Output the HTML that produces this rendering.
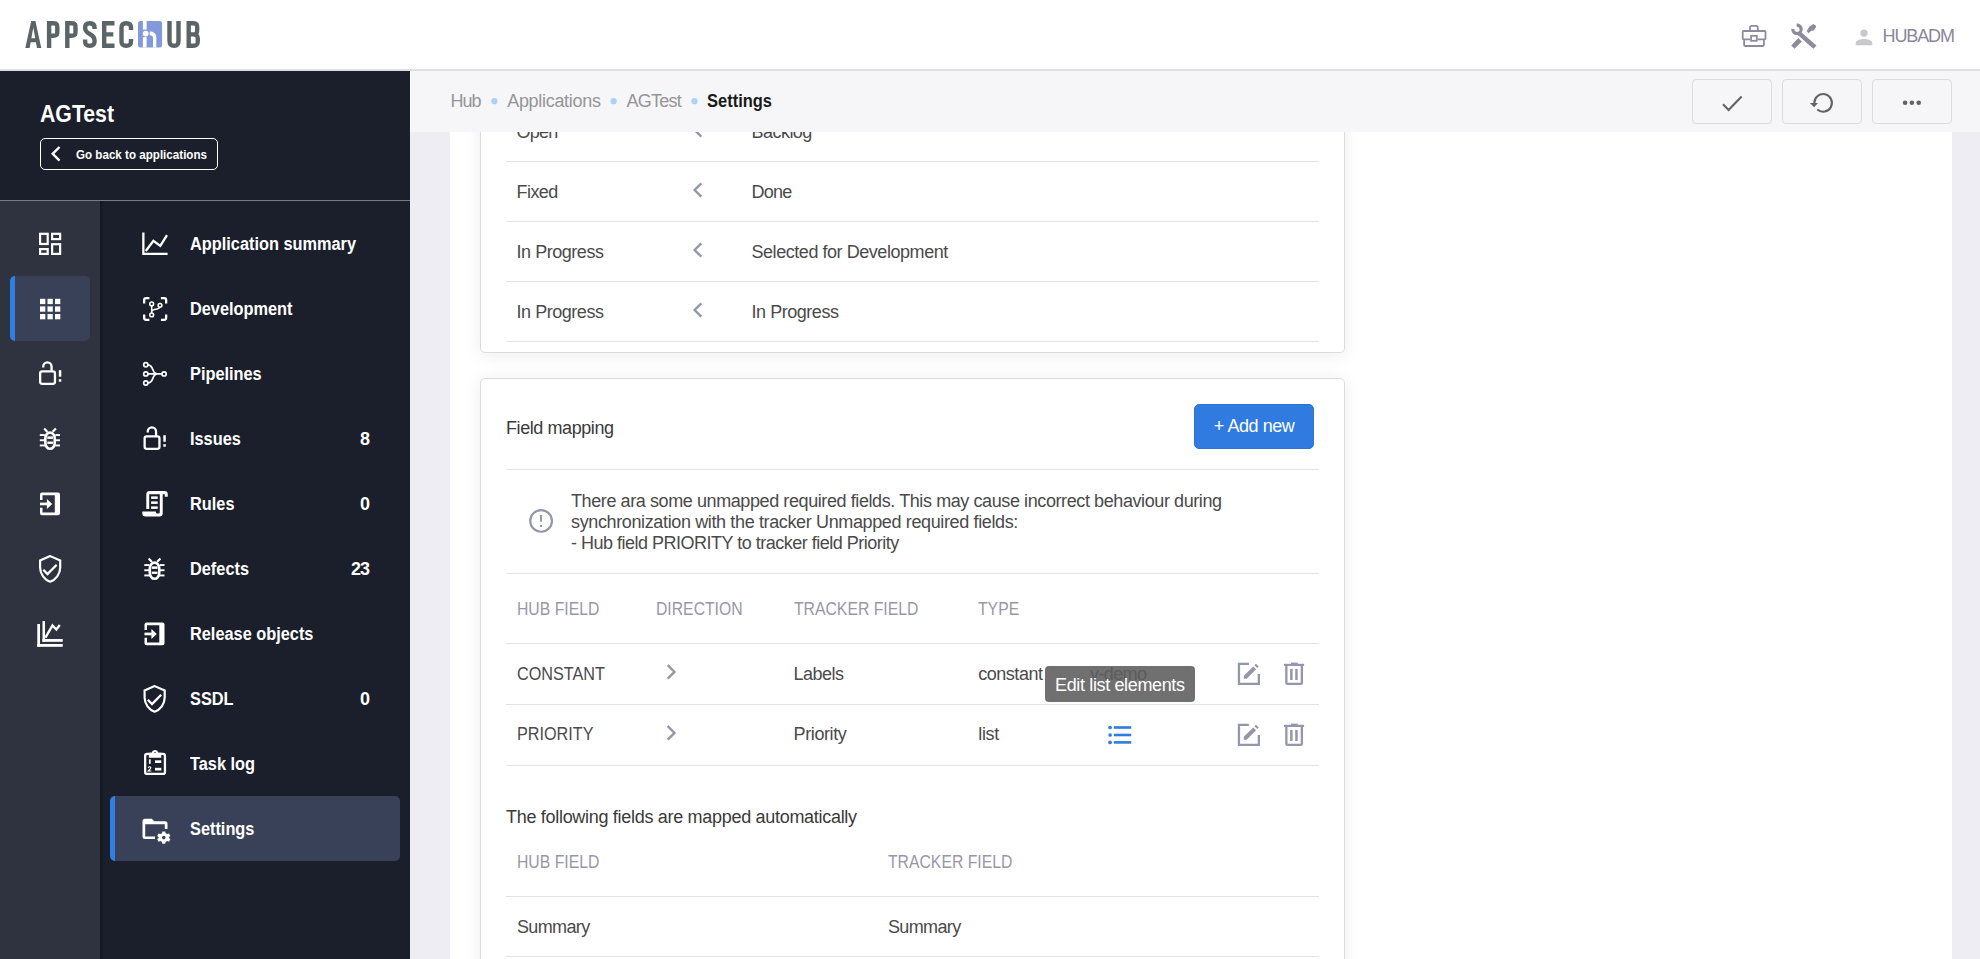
<!DOCTYPE html>
<html><head><meta charset="utf-8"><title>AppSec Hub - Settings</title>
<style>
html,body{margin:0;padding:0;}
body{width:1980px;height:959px;overflow:hidden;position:relative;background:#ededf3;font-family:"Liberation Sans",sans-serif;}
.b{position:absolute;box-sizing:border-box;}
.t{position:absolute;white-space:nowrap;line-height:1;font-family:"Liberation Sans",sans-serif;}
</style></head><body>
<!-- content white panel -->
<div class="b" style="left:450px;top:132px;width:1502px;height:827px;background:#fff"></div>
<!-- card 1 -->
<div class="b" style="left:480px;top:60px;width:865px;height:293px;background:#fff;border:1px solid #dcdcdc;border-radius:5px;box-shadow:0 2px 18px rgba(0,0,0,0.075)"></div>
<!-- card 2 -->
<div class="b" style="left:480px;top:378px;width:865px;height:640px;background:#fff;border:1px solid #dcdcdc;border-radius:5px;box-shadow:0 2px 18px rgba(0,0,0,0.075)"></div>
<!-- card 1 separators -->
<div class="b" style="left:506px;top:161px;width:813px;height:1px;background:#e3e3e3"></div>
<div class="b" style="left:506px;top:221px;width:813px;height:1px;background:#e3e3e3"></div>
<div class="b" style="left:506px;top:281px;width:813px;height:1px;background:#e3e3e3"></div>
<div class="b" style="left:506px;top:341px;width:813px;height:1px;background:#e3e3e3"></div>
<!-- card 2 separators -->
<div class="b" style="left:506px;top:469px;width:813px;height:1px;background:#e3e3e3"></div>
<div class="b" style="left:506px;top:573px;width:813px;height:1px;background:#e3e3e3"></div>
<div class="b" style="left:506px;top:643px;width:813px;height:1px;background:#e3e3e3"></div>
<div class="b" style="left:506px;top:704px;width:813px;height:1px;background:#e3e3e3"></div>
<div class="b" style="left:506px;top:765px;width:813px;height:1px;background:#e3e3e3"></div>
<div class="b" style="left:506px;top:896px;width:813px;height:1px;background:#e3e3e3"></div>
<div class="b" style="left:506px;top:956px;width:813px;height:1px;background:#e3e3e3"></div>
<!-- add new button -->
<div class="b" style="left:1194px;top:404px;width:120px;height:45px;background:#2f7be0;border:1px solid #2a72d8;border-radius:5px"></div>
<div class="t" style="left:516.50px;top:122.76px;font-size:18px;color:#4a4a4a;letter-spacing:-0.734px;">Open</div>
<div class="t" style="left:751.50px;top:122.76px;font-size:18px;color:#4a4a4a;letter-spacing:-0.534px;">Backlog</div>
<div class="t" style="left:516.50px;top:182.76px;font-size:18px;color:#4a4a4a;letter-spacing:-0.550px;">Fixed</div>
<div class="t" style="left:751.50px;top:182.76px;font-size:18px;color:#4a4a4a;letter-spacing:-0.717px;">Done</div>
<div class="t" style="left:516.50px;top:242.76px;font-size:18px;color:#4a4a4a;letter-spacing:-0.460px;">In Progress</div>
<div class="t" style="left:751.50px;top:242.76px;font-size:18px;color:#4a4a4a;letter-spacing:-0.450px;">Selected for Development</div>
<div class="t" style="left:516.50px;top:302.76px;font-size:18px;color:#4a4a4a;letter-spacing:-0.460px;">In Progress</div>
<div class="t" style="left:751.50px;top:302.76px;font-size:18px;color:#4a4a4a;letter-spacing:-0.460px;">In Progress</div>
<div class="t" style="left:506.00px;top:419.06px;font-size:18px;color:#3a3a3a;letter-spacing:-0.421px;">Field mapping</div>
<div class="t" style="left:1213.80px;top:417.26px;font-size:18px;color:#ffffff;letter-spacing:-0.446px;">+ Add new</div>
<div class="t" style="left:571.00px;top:491.76px;font-size:18px;color:#4a4a4a;letter-spacing:-0.407px;">There ara some unmapped required fields. This may cause incorrect behaviour during</div>
<div class="t" style="left:571.00px;top:512.71px;font-size:18px;color:#4a4a4a;letter-spacing:-0.367px;">synchronization with the tracker Unmapped required fields:</div>
<div class="t" style="left:571.00px;top:533.66px;font-size:18px;color:#4a4a4a;letter-spacing:-0.501px;">- Hub field PRIORITY to tracker field Priority</div>
<div class="t" style="left:517.00px;top:599.56px;font-size:18px;color:#9897a8;transform:scaleX(0.8750);transform-origin:0 0;">HUB FIELD</div>
<div class="t" style="left:655.60px;top:599.56px;font-size:18px;color:#9897a8;transform:scaleX(0.8750);transform-origin:0 0;">DIRECTION</div>
<div class="t" style="left:793.60px;top:599.56px;font-size:18px;color:#9897a8;transform:scaleX(0.8750);transform-origin:0 0;">TRACKER FIELD</div>
<div class="t" style="left:978.30px;top:599.56px;font-size:18px;color:#9897a8;transform:scaleX(0.8750);transform-origin:0 0;">TYPE</div>
<div class="t" style="left:517.00px;top:664.66px;font-size:18px;color:#4a4a4a;transform:scaleX(0.9000);transform-origin:0 0;">CONSTANT</div>
<div class="t" style="left:793.60px;top:664.66px;font-size:18px;color:#4a4a4a;letter-spacing:-0.530px;">Labels</div>
<div class="t" style="left:978.30px;top:664.66px;font-size:18px;color:#4a4a4a;letter-spacing:-0.486px;">constant</div>
<div class="t" style="left:517.00px;top:725.46px;font-size:18px;color:#4a4a4a;transform:scaleX(0.9000);transform-origin:0 0;">PRIORITY</div>
<div class="t" style="left:793.60px;top:725.46px;font-size:18px;color:#4a4a4a;letter-spacing:-0.400px;">Priority</div>
<div class="t" style="left:978.30px;top:725.46px;font-size:18px;color:#4a4a4a;letter-spacing:-0.367px;">list</div>
<div class="t" style="left:1090.00px;top:664.66px;font-size:18px;color:#333;letter-spacing:-0.600px;">v-demo</div>
<div class="t" style="left:506.00px;top:807.96px;font-size:18px;color:#3a3a3a;letter-spacing:-0.299px;">The following fields are mapped automatically</div>
<div class="t" style="left:517.00px;top:853.26px;font-size:18px;color:#9897a8;transform:scaleX(0.8750);transform-origin:0 0;">HUB FIELD</div>
<div class="t" style="left:888.00px;top:853.26px;font-size:18px;color:#9897a8;transform:scaleX(0.8750);transform-origin:0 0;">TRACKER FIELD</div>
<div class="t" style="left:517.00px;top:917.56px;font-size:18px;color:#4a4a4a;letter-spacing:-0.642px;">Summary</div>
<div class="t" style="left:888.00px;top:917.56px;font-size:18px;color:#4a4a4a;letter-spacing:-0.642px;">Summary</div>
<svg style="position:absolute;left:0;top:0" width="1980" height="959" viewBox="0 0 1980 959">
<g fill="none" stroke="#9497ab" stroke-width="2.35" stroke-linecap="butt" stroke-linejoin="miter">
<path d="M701.3,123.3 L694.6,130 L701.3,136.7"/>
<path d="M701.3,183.3 L694.6,190 L701.3,196.7"/>
<path d="M701.3,243.3 L694.6,250 L701.3,256.7"/>
<path d="M701.3,303.3 L694.6,310 L701.3,316.7"/>
<path d="M667.7,665.2 L674.5,671.9 L667.7,678.6"/>
<path d="M667.7,726.2 L674.5,732.9 L667.7,739.6"/>
<circle cx="541.1" cy="520.9" r="10.85" stroke-width="2.2"/>
</g>
<g fill="#9497ab">
<rect x="540" y="515" width="2" height="6.7"/>
<rect x="540" y="525" width="2" height="2"/>
</g>
<!-- edit / trash -->
<g>
<path d="M1248.9,663.95 H1238.95 V683.85 H1258.85 V673.9" fill="none" stroke="#9497ab" stroke-width="2.3"/>
<path d="M1243.8,675.8 L1253.2,666.4 L1256.1,669.3 L1246.7,678.7 L1243.8,678.7 Z" fill="#9497ab"/>
<path d="M1254.4,665.2 L1255.9,663.7 L1258.8,666.6 L1257.3,668.1 Z" fill="#9497ab"/>
<rect x="1284" y="663.8" width="20.1" height="2.2" fill="#9497ab"/>
<rect x="1291" y="662.6" width="6.8" height="2" fill="#9497ab"/>
<path d="M1286.35,666 V682.8 Q1286.35,683.85 1287.4,683.85 H1300.8 Q1301.85,683.85 1301.85,682.8 V666" fill="none" stroke="#9497ab" stroke-width="2.3"/>
<rect x="1290.1" y="668.9" width="2.5" height="11.1" fill="#9497ab"/>
<rect x="1295.2" y="668.9" width="2.5" height="11.1" fill="#9497ab"/>
</g>
<g transform="translate(0,61)">
<path d="M1248.9,663.95 H1238.95 V683.85 H1258.85 V673.9" fill="none" stroke="#9497ab" stroke-width="2.3"/>
<path d="M1243.8,675.8 L1253.2,666.4 L1256.1,669.3 L1246.7,678.7 L1243.8,678.7 Z" fill="#9497ab"/>
<path d="M1254.4,665.2 L1255.9,663.7 L1258.8,666.6 L1257.3,668.1 Z" fill="#9497ab"/>
<rect x="1284" y="663.8" width="20.1" height="2.2" fill="#9497ab"/>
<rect x="1291" y="662.6" width="6.8" height="2" fill="#9497ab"/>
<path d="M1286.35,666 V682.8 Q1286.35,683.85 1287.4,683.85 H1300.8 Q1301.85,683.85 1301.85,682.8 V666" fill="none" stroke="#9497ab" stroke-width="2.3"/>
<rect x="1290.1" y="668.9" width="2.5" height="11.1" fill="#9497ab"/>
<rect x="1295.2" y="668.9" width="2.5" height="11.1" fill="#9497ab"/>
</g>
<!-- list icon -->
<g fill="#2f7be0">
<circle cx="1110.1" cy="727.5" r="1.85"/><circle cx="1110.1" cy="735" r="1.85"/><circle cx="1110.1" cy="742.4" r="1.85"/>
<rect x="1113.8" y="726.2" width="17.4" height="2.6"/><rect x="1113.8" y="733.7" width="17.4" height="2.6"/><rect x="1113.8" y="741.1" width="17.4" height="2.6"/>
</g>
</svg>

<!-- tooltip -->
<div class="b" style="left:1045px;top:666px;width:150px;height:35.5px;background:rgba(97,97,97,0.9);border-radius:4px"></div>
<div class="t" style="left:1055px;top:676.26px;font-size:18px;color:#ffffff;letter-spacing:-0.356px">Edit list elements</div>
<!-- header -->
<div class="b" style="left:0;top:0;width:1980px;height:71px;background:#fff;border-bottom:2px solid #e0e0e0"></div>
<!-- breadcrumb bar -->
<div class="b" style="left:410px;top:71px;width:1px;height:61px;background:#fff"></div>
<div class="b" style="left:411px;top:71px;width:1569px;height:61px;background:#f6f6f9"></div>
<!-- action buttons -->
<div class="b" style="left:1692px;top:79px;width:80px;height:45px;border:1px solid #dcdcdc;border-radius:4px"></div>
<div class="b" style="left:1782px;top:79px;width:80px;height:45px;border:1px solid #dcdcdc;border-radius:4px"></div>
<div class="b" style="left:1872px;top:79px;width:80px;height:45px;border:1px solid #dcdcdc;border-radius:4px"></div>
<!-- sidebar -->
<div class="b" style="left:0;top:71px;width:410px;height:888px;background:#1b1f2b"></div>
<div class="b" style="left:0;top:200px;width:410px;height:1px;background:#797b82"></div>
<div class="b" style="left:0;top:201px;width:100px;height:758px;background:#2f333f"></div>
<div class="b" style="left:100px;top:201px;width:4px;height:758px;background:linear-gradient(90deg,rgba(0,0,0,0.3),rgba(0,0,0,0))"></div>
<div class="b" style="left:10px;top:276px;width:80px;height:65px;background:#384157;border-radius:5px;border-left:5px solid #2f7fe3"></div>
<div class="b" style="left:110px;top:796px;width:290px;height:65px;background:#384157;border-radius:5px;border-left:5px solid #2f7fe3"></div>
<div class="b" style="left:40px;top:138px;width:178px;height:32px;border:1px solid #fff;border-radius:5px"></div>
<div class="t" style="left:1882.60px;top:27.36px;font-size:18px;color:#8a8799;letter-spacing:-1.141px;">HUBADM</div>
<div class="t" style="left:450.60px;top:91.76px;font-size:18px;color:#959595;letter-spacing:-1.009px;">Hub</div>
<div class="t" style="left:507.20px;top:91.76px;font-size:18px;color:#959595;letter-spacing:-0.305px;">Applications</div>
<div class="t" style="left:626.50px;top:91.76px;font-size:18px;color:#959595;letter-spacing:-0.744px;">AGTest</div>
<div class="t" style="left:707.30px;top:91.76px;font-size:18px;color:#1a1a1a;font-weight:bold;transform:scaleX(0.9155);transform-origin:0 0;">Settings</div>
<div class="t" style="left:40.00px;top:102.53px;font-size:23px;color:#ffffff;font-weight:bold;transform:scaleX(0.9241);transform-origin:0 0;">AGTest</div>
<div class="t" style="left:76.00px;top:148.40px;font-size:13px;color:#ffffff;font-weight:bold;transform:scaleX(0.8934);transform-origin:0 0;">Go back to applications</div>
<div class="t" style="left:190.00px;top:235.06px;font-size:18px;color:#ffffff;font-weight:bold;transform:scaleX(0.9070);transform-origin:0 0;">Application summary</div>
<div class="t" style="left:190.00px;top:300.06px;font-size:18px;color:#ffffff;font-weight:bold;transform:scaleX(0.9070);transform-origin:0 0;">Development</div>
<div class="t" style="left:190.00px;top:365.06px;font-size:18px;color:#ffffff;font-weight:bold;transform:scaleX(0.9070);transform-origin:0 0;">Pipelines</div>
<div class="t" style="left:190.00px;top:430.06px;font-size:18px;color:#ffffff;font-weight:bold;transform:scaleX(0.9070);transform-origin:0 0;">Issues</div>
<div class="t" style="left:359.99px;top:430.06px;font-size:18px;color:#ffffff;font-weight:bold;">8</div>
<div class="t" style="left:190.00px;top:495.06px;font-size:18px;color:#ffffff;font-weight:bold;transform:scaleX(0.9070);transform-origin:0 0;">Rules</div>
<div class="t" style="left:359.99px;top:495.06px;font-size:18px;color:#ffffff;font-weight:bold;">0</div>
<div class="t" style="left:190.00px;top:560.06px;font-size:18px;color:#ffffff;font-weight:bold;transform:scaleX(0.9070);transform-origin:0 0;">Defects</div>
<div class="t" style="left:350.98px;top:560.06px;font-size:18px;color:#ffffff;font-weight:bold;letter-spacing:-1.001px;">23</div>
<div class="t" style="left:190.00px;top:625.06px;font-size:18px;color:#ffffff;font-weight:bold;transform:scaleX(0.9070);transform-origin:0 0;">Release objects</div>
<div class="t" style="left:190.00px;top:690.06px;font-size:18px;color:#ffffff;font-weight:bold;transform:scaleX(0.9070);transform-origin:0 0;">SSDL</div>
<div class="t" style="left:359.99px;top:690.06px;font-size:18px;color:#ffffff;font-weight:bold;">0</div>
<div class="t" style="left:190.00px;top:755.06px;font-size:18px;color:#ffffff;font-weight:bold;transform:scaleX(0.9070);transform-origin:0 0;">Task log</div>
<div class="t" style="left:190.00px;top:820.06px;font-size:18px;color:#ffffff;font-weight:bold;transform:scaleX(0.9070);transform-origin:0 0;">Settings</div>
<svg style="position:absolute;left:0;top:0" width="1980" height="959" viewBox="0 0 1980 959">
<!-- logo -->
<g fill="none" stroke="#5b6466" stroke-width="4.4" stroke-linejoin="miter">
<path d="M49.1,48 V23.3 H53.5 C57.3,23.3 57.3,24.5 57.3,28 V31 C57.3,34.5 57.3,35.7 53.5,35.7 H49.1"/>
<path d="M67.3,48 V23.3 H71.7 C75.5,23.3 75.5,24.5 75.5,28 V31 C75.5,34.5 75.5,35.7 71.7,35.7 H67.3"/>
<path d="M94.6,29 V28 C94.6,24.5 93,23.3 89.8,23.3 C86.6,23.3 85.1,24.5 85.1,28 C85.1,31.5 87,32.6 89.8,34 C92.8,35.5 94.6,36.8 94.6,41 C94.6,44.6 93,45.8 89.8,45.8 C86.6,45.8 85.1,44.6 85.1,41 V39.5"/>
<path d="M114.5,23.3 H104.2 V45.8 H114.5 M104.2,34.4 H113.3"/>
<path d="M131,30 V28 C131,24.5 129.5,23.3 126.2,23.3 C123,23.3 121.5,24.5 121.5,28 V41 C121.5,44.6 123,45.8 126.2,45.8 C129.5,45.8 131,44.6 131,41 V39"/>
<path d="M169.5,21.1 V40.8 C169.5,44.6 171,45.8 174,45.8 C177,45.8 178.5,44.6 178.5,40.8 V21.1"/>
<path d="M188.7,48 V23.3 H193.2 C196.9,23.3 197.2,24.5 197.2,28 V29.8 C197.2,33.3 196.4,34.4 193.2,34.4 H188.7 M193.2,34.4 C197,34.4 197.8,35.6 197.8,39 V41.1 C197.8,44.7 196.9,45.8 193.2,45.8 H186.5"/>
</g>
<path fill="#5b6466" fill-rule="evenodd" d="M25.3,48 L31.2,21.1 L35.4,21.1 L41.3,48 L37,48 L35.9,42.2 L30.7,42.2 L29.6,48 Z M31.4,38.2 L35.2,38.2 L33.3,27.5 Z"/>
<rect x="138" y="21" width="24.1" height="26.5" rx="2.5" fill="#8399d9"/>
<rect x="142.9" y="21" width="3.7" height="8.6" fill="#fff"/>
<rect x="142.9" y="37.1" width="3.7" height="10.4" fill="#fff"/>
<circle cx="145.7" cy="33.6" r="2.9" fill="#fff"/>
<path d="M149.7,31.6 C153.5,31.6 156.3,33.5 156.3,37.5 V47.5 H153 V37.8 C153,36 151.8,35.2 149.7,35.2 Z" fill="#fff"/>
<g fill="#acd0f6"><circle cx="494.4" cy="101.2" r="3.1"/><circle cx="613.6" cy="101.2" r="3.1"/><circle cx="694.5" cy="101.2" r="3.1"/></g>
<!-- header icons -->
<g fill="none" stroke="#8e8c9c" stroke-width="1.8">
<path d="M1750.1,39.4 H1743.5 Q1742.7,39.4 1742.7,38.6 V31.8 Q1742.7,31 1743.5,31 H1764.7 Q1765.5,31 1765.5,31.8 V38.6 Q1765.5,39.4 1764.7,39.4 H1757.7"/>
<path d="M1744.1,39.4 V45.1 Q1744.1,46 1745,46 H1763 Q1763.9,46 1763.9,45.1 V39.4"/>
<path d="M1750,31 V27.6 Q1750,25.8 1751.7,25.8 H1756.1 Q1757.8,25.8 1757.8,27.6 V31"/>
<rect x="1751.1" y="35.8" width="5.7" height="5"/>
</g>
<g fill="#8e8c9c">
<path d="M1798.3,38 L1801.8,41.4 L1794.5,48.7 L1791.2,45.4 Z"/>
<path d="M1806.7,31 L1809.4,26.5 L1813.4,24 L1816,25.7 L1816,27.3 L1813.7,30.5 L1811.4,30.7 L1808.4,33.2 Z"/>
<path d="M1797.2,34.6 L1800.4,31.4 L1816.5,45.4 L1813.4,48.7 Z"/>
<path d="M1796.5,23.5 A5.8,5.8 0 1 1 1791.2,28.8 L1794.4,29.07 A2.6,2.6 0 1 0 1796.77,26.71 Z"/>
</g>
<g fill="#c8c8cf">
<circle cx="1864" cy="33.1" r="3.7"/>
<path d="M1855.8,45.2 V43.2 C1855.8,40.6 1860.2,39.1 1864,39.1 C1867.8,39.1 1872.3,40.6 1872.3,43.2 V45.2 Z"/>
</g>
<!-- button icons -->
<g fill="none" stroke="#636363" stroke-width="2.1">
<path d="M1723,104.2 L1728.6,109.9 L1741.6,96.4"/>
<path d="M1817.3,109.5 A8.8,8.8 0 1 0 1814.3,102.9"/>
</g>
<path d="M1809.9,103.1 L1818,103.1 L1814.1,107.2 Z" fill="#636363"/>
<g fill="#636363"><circle cx="1905.1" cy="102.8" r="2.3"/><circle cx="1911.9" cy="102.8" r="2.3"/><circle cx="1918.7" cy="102.8" r="2.3"/></g>
<!-- sidebar -->
<path d="M59.5,147 L52.7,153.8 L59.5,160.6" fill="none" stroke="#fff" stroke-width="2.4"/>
<!-- rail icons -->
<g fill="none" stroke="#fff" stroke-width="2.2">
<rect x="40.1" y="233.8" width="7.6" height="10.2"/>
<rect x="52.1" y="233.8" width="8" height="5.3"/>
<rect x="40.1" y="249.1" width="7.6" height="4.8"/>
<rect x="52.1" y="244.2" width="8" height="9.7"/>
</g>
<g fill="#fff">
<rect x="40" y="298.8" width="5.3" height="5.3"/><rect x="47.5" y="298.8" width="5.3" height="5.3"/><rect x="55" y="298.8" width="5.3" height="5.3"/>
<rect x="40" y="306.4" width="5.3" height="5.3"/><rect x="47.5" y="306.4" width="5.3" height="5.3"/><rect x="55" y="306.4" width="5.3" height="5.3"/>
<rect x="40" y="314" width="5.3" height="5.3"/><rect x="47.5" y="314" width="5.3" height="5.3"/><rect x="55" y="314" width="5.3" height="5.3"/>
</g>
<g>
<rect x="40.15" y="371.35" width="14.8" height="12.5" rx="2" fill="none" stroke="#fff" stroke-width="2.3"/>
<path d="M43.25,367.6 V366.6 A4.15,4.15 0 0 1 51.55,366.6 V371.35" fill="none" stroke="#fff" stroke-width="2.3"/>
<rect x="58.8" y="370.2" width="2.5" height="6.5" fill="#fff"/>
<rect x="58.8" y="379.2" width="2.5" height="2.5" fill="#fff"/>
</g>
<g>
<rect x="45.35" y="432.6" width="9.4" height="16.2" rx="4.7" ry="5.8" fill="none" stroke="#fff" stroke-width="2.6"/>
<g fill="#fff">
<rect x="39.8" y="434.1" width="5" height="1.9"/><rect x="39.8" y="439.3" width="5" height="1.9"/><rect x="39.8" y="444.5" width="5" height="1.9"/>
<rect x="55.3" y="434.1" width="4.7" height="1.9"/><rect x="55.3" y="439.3" width="4.7" height="1.9"/><rect x="55.3" y="444.5" width="4.7" height="1.9"/>
<rect x="47.3" y="436.4" width="5.7" height="2.5"/><rect x="47.3" y="441.6" width="5.7" height="2.3"/>
</g>
<path d="M44.2,428.6 L47.4,431.9 M55.9,428.4 L52.7,431.7" stroke="#fff" stroke-width="2.2"/>
</g>
<g fill="#fff">
<path d="M40,500.1 V494.6 Q40,492.6 42,492.6 H58 Q60,492.6 60,494.6 V513.3 Q60,515.3 58,515.3 H42 Q40,515.3 40,513.3 V507.8 H42.5 V512.5 H54.8 V495.2 H42.5 V500.1 Z"/>
<rect x="40" y="502.6" width="7.3" height="2.7"/>
<path d="M46.9,498.9 L52.3,504 L46.9,509.1 Z"/>
</g>
<g fill="none" stroke="#fff" stroke-width="2.2">
<path d="M50.15,556.1 L40.1,560.4 V567.5 C40.1,574 44.5,579.8 50.15,581.7 C55.8,579.8 60.2,574 60.2,567.5 V560.4 Z"/>
<path d="M43.3,569.7 L47.5,574 L56.7,564.7" stroke-width="2.3"/>
</g>
<g fill="#fff">
<rect x="37.3" y="624" width="2.7" height="22.8"/><rect x="37.3" y="644" width="25.45" height="2.8"/>
<rect x="42.5" y="621.1" width="2.5" height="20.7"/><rect x="42.5" y="639" width="20.25" height="2.8"/>
</g>
<path d="M45.4,637.6 L52.5,625.5 L56.3,629.5 L59.8,625" fill="none" stroke="#fff" stroke-width="2.35"/>
<!-- nav icons -->
<g fill="none" stroke="#fff" stroke-width="2.3">
<path d="M143.35,232.6 V253.95 H167.6"/>
<path d="M145.8,251 L153.4,240.8 L160.3,245.9 L167,235.2"/>
<path d="M144.15,303.6 V300.15 Q144.15,298.15 146.15,298.15 H149.4 M160.9,298.15 H164.15 Q166.15,298.15 166.15,300.15 V303.6 M166.15,314.4 V317.85 Q166.15,319.85 164.15,319.85 H160.9 M149.4,319.85 H146.15 Q144.15,319.85 144.15,317.85 V314.4"/>
</g>
<g fill="none" stroke="#fff" stroke-width="1.5">
<circle cx="151.7" cy="303.9" r="1.9"/><circle cx="160" cy="305.3" r="1.9"/><circle cx="151.7" cy="314.9" r="1.9"/>
<path d="M151.7,305.8 V313 M151.7,311.6 C152.3,309.6 154.8,309.3 157,308.9 C158.8,308.5 159.5,307.6 159.8,307.2"/>
</g>
<g fill="none" stroke="#fff" stroke-width="1.7">
<circle cx="145.8" cy="364.8" r="2.1"/><circle cx="145.8" cy="373.9" r="2.1"/><circle cx="145.8" cy="383" r="2.1"/><circle cx="164.1" cy="373.9" r="2.1"/>
<path d="M147.9,364.8 C151,365 152,367 153,370 C154,372.8 155.5,373.9 157.5,373.9 H162 M147.9,373.9 H157.5 M147.9,383 C151,382.8 152,381 153,378 C154,375 155.5,373.9 157.5,373.9"/>
</g>
<g transform="translate(104.5,65)">
<rect x="40.15" y="371.35" width="14.8" height="12.5" rx="2" fill="none" stroke="#fff" stroke-width="2.3"/>
<path d="M43.25,367.6 V366.6 A4.15,4.15 0 0 1 51.55,366.6 V371.35" fill="none" stroke="#fff" stroke-width="2.3"/>
<rect x="58.8" y="370.2" width="2.5" height="6.5" fill="#fff"/>
<rect x="58.8" y="379.2" width="2.5" height="2.5" fill="#fff"/>
</g>
<path fill="#fff" d="M146.3,508.9 V494.5 Q146.3,491.1 149.7,491.1 H164.5 Q167.75,491.1 167.75,494.4 V496.8 H164.8 V494.3 H162.7 V513.3 Q162.7,516.6 159.4,516.6 H145.6 Q142.3,516.6 142.3,513.3 V511.4 H155.9 V512.3 Q155.9,513.6 157.3,513.6 H158.6 Q159.8,513.6 159.8,512.3 V494.3 H149.2 V508.9 Z"/>
<g fill="#fff"><rect x="151.1" y="496.4" width="6.6" height="2.5"/><rect x="151.1" y="501.4" width="6.6" height="2.5"/><rect x="151.1" y="506.4" width="6.6" height="2.5"/></g>
<g transform="translate(104.5,130)">
<rect x="45.35" y="432.6" width="9.4" height="16.2" rx="4.7" ry="5.8" fill="none" stroke="#fff" stroke-width="2.6"/>
<g fill="#fff">
<rect x="39.8" y="434.1" width="5" height="1.9"/><rect x="39.8" y="439.3" width="5" height="1.9"/><rect x="39.8" y="444.5" width="5" height="1.9"/>
<rect x="55.3" y="434.1" width="4.7" height="1.9"/><rect x="55.3" y="439.3" width="4.7" height="1.9"/><rect x="55.3" y="444.5" width="4.7" height="1.9"/>
<rect x="47.3" y="436.4" width="5.7" height="2.5"/><rect x="47.3" y="441.6" width="5.7" height="2.3"/>
</g>
<path d="M44.2,428.6 L47.4,431.9 M55.9,428.4 L52.7,431.7" stroke="#fff" stroke-width="2.2"/>
</g>
<g transform="translate(104.5,130)" fill="#fff">
<path d="M40,500.1 V494.6 Q40,492.6 42,492.6 H58 Q60,492.6 60,494.6 V513.3 Q60,515.3 58,515.3 H42 Q40,515.3 40,513.3 V507.8 H42.5 V512.5 H54.8 V495.2 H42.5 V500.1 Z"/>
<rect x="40" y="502.6" width="7.3" height="2.7"/>
<path d="M46.9,498.9 L52.3,504 L46.9,509.1 Z"/>
</g>
<g transform="translate(104.5,130)" fill="none" stroke="#fff" stroke-width="2.2">
<path d="M50.15,556.1 L40.1,560.4 V567.5 C40.1,574 44.5,579.8 50.15,581.7 C55.8,579.8 60.2,574 60.2,567.5 V560.4 Z"/>
<path d="M43.3,569.7 L47.5,574 L56.7,564.7" stroke-width="2.3"/>
</g>
<!-- task log -->
<rect x="145.15" y="753.95" width="19.8" height="20" rx="2" fill="none" stroke="#fff" stroke-width="2.3"/>
<path fill="#fff" fill-rule="evenodd" d="M148.8,752.8 H151.7 C152.2,750.9 153.4,750.1 155,750.1 C156.6,750.1 157.8,750.9 158.3,752.8 H161.3 V757.8 H148.8 Z M155,753.1 m-1.1,0 a1.1,1.1 0 1 0 2.2,0 a1.1,1.1 0 1 0 -2.2,0 Z"/>
<g fill="#fff"><rect x="148.9" y="759.3" width="1.8" height="4.5"/><rect x="155" y="760.3" width="6.3" height="2.7"/><rect x="155" y="767.8" width="6.3" height="2.7"/></g>
<path d="M148.2,767.8 Q149,766.6 150,766.8 Q151.2,767.2 150.4,768.6 L148.2,771 H151.3" fill="none" stroke="#fff" stroke-width="1.2"/>
<!-- settings folder gear -->
<path fill="#fff" d="M142.5,821.3 Q142.5,818.8 145,818.8 H151.8 L154.3,821.3 H165 Q167.5,821.3 167.5,823.8 V828.9 H164.8 V824.3 H145.2 V836.5 H155 V839.1 H145 Q142.5,839.1 142.5,836.6 Z"/>
<g transform="translate(163.8,837.6)">
<path fill="#fff" fill-rule="evenodd" d="M-1.4,-6.2 H1.4 L1.8,-4.4 L3.4,-3.5 L5.2,-4.1 L6.6,-1.7 L5.2,-0.5 V0.5 L6.6,1.7 L5.2,4.1 L3.4,3.5 L1.8,4.4 L1.4,6.2 H-1.4 L-1.8,4.4 L-3.4,3.5 L-5.2,4.1 L-6.6,1.7 L-5.2,0.5 V-0.5 L-6.6,-1.7 L-5.2,-4.1 L-3.4,-3.5 L-1.8,-4.4 Z M0,-1.8 A1.8,1.8 0 1 0 0,1.8 A1.8,1.8 0 1 0 0,-1.8 Z"/>
</g>
</svg>

</body></html>
